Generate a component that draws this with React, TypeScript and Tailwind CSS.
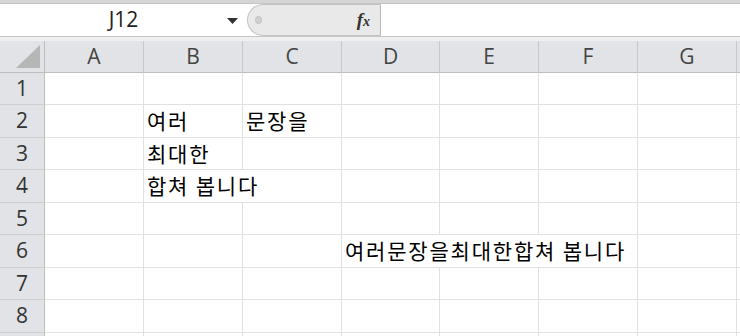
import React from 'react';

const cols = ['A', 'B', 'C', 'D', 'E', 'F', 'G'];
const rowHeights = [32, 33, 32, 33, 32, 33, 32, 33, 20];

// cell text keyed by "row-col"
const cells: Record<string, string> = {
  '2-1': '여러',
  '2-2': '문장을',
  '3-1': '최대한',
  '4-1': '합쳐 봅니다',
  '6-3': '여러문장을최대한합쳐 봅니다',
};

// cells whose text runs over the right border
const overflow = new Set(['4-1', '6-3', '6-4']);

const kr = { fontFamily: '"Noto Sans CJK KR", "Noto Sans", sans-serif' };
const ui = { fontFamily: '"Open Sans", "Noto Sans", sans-serif' };

export default function App() {
  return (
    <div className="w-[740px] h-[336px] overflow-hidden bg-white flex flex-col" style={ui}>
      <div className="h-[4px] bg-[#d5d5d5] border-b border-[#c4c4c4] shrink-0" />

      {/* name box + formula bar */}
      <div className="h-[33px] shrink-0 flex border-b border-[#c6c6c6]">
        <div className="w-[247px] relative flex items-center justify-center bg-white">
          <span className="text-[21px] text-[#222] leading-none -mt-[2px]">J12</span>
          <svg className="absolute left-[227px] top-[14px]" width="11" height="7" viewBox="0 0 11 7">
            <polygon points="0,0 11,0 5.5,6" fill="#333" />
          </svg>
        </div>
        <div className="w-[134px] bg-[#e9e9e9] border border-[#c4c4c4] border-r-[#b9b9b9] rounded-l-full flex items-center pl-[7px] pr-[10px]">
          <div className="w-[7px] h-[8px] rounded-full bg-[#cfcfcf] border border-[#c2c2c2]" />
          <div className="flex-1" />
          <span
            className="italic font-bold text-[19px] text-[#333] leading-none -mt-[2px]"
            style={{ fontFamily: '"Liberation Serif", serif' }}
          >
            f<span className="text-[14px]">x</span>
          </span>
        </div>
        <div className="flex-1 bg-white" />
      </div>

      <div className="h-[4px] shrink-0 bg-[#f0f0f0]" />

      {/* sheet */}
      <div className="grid grid-cols-[45px_99px_99px_99px_98px_99px_99px_99px_1fr]">
        <div className="h-[32px] bg-[#e1e3e6] border-r border-b border-[#bdbdbd] flex items-end justify-end pr-[4px] pb-[4px]">
          <svg width="24" height="23" viewBox="0 0 24 23">
            <polygon points="24,0 24,23 0,23" fill="#b6b6b6" />
          </svg>
        </div>
        {cols.map((c) => (
          <div
            key={c}
            className="h-[32px] bg-[#e1e3e6] border-r border-b border-r-[#c8c8c8] border-b-[#bdbdbd] flex items-center justify-center text-[21px] text-[#444]"
          >
            {c}
          </div>
        ))}
        <div className="h-[32px] bg-[#e1e3e6] border-b border-[#bdbdbd]" />

        {rowHeights.map((h, ri) => {
          const r = ri + 1;
          return (
            <React.Fragment key={r}>
              <div
                className="bg-[#e1e3e6] border-r border-b border-r-[#bdbdbd] border-b-[#cdcdcd] flex items-center justify-center text-[21px] text-[#333]"
                style={{ height: h }}
              >
                {r < 9 ? r : ''}
              </div>
              {cols.map((c, ci) => {
                const key = `${r}-${ci}`;
                const text = cells[key];
                return (
                  <div
                    key={c}
                    className={`border-b border-[#e1e1e1] flex items-center pl-[3px] whitespace-nowrap text-[21px] tracking-[1.8px] text-black ${
                      overflow.has(key) ? '' : 'border-r'
                    }`}
                    style={{ height: h, ...kr }}
                  >
                    {text}
                  </div>
                );
              })}
              <div className="border-b border-[#e1e1e1]" style={{ height: h }} />
            </React.Fragment>
          );
        })}
      </div>
    </div>
  );
}
